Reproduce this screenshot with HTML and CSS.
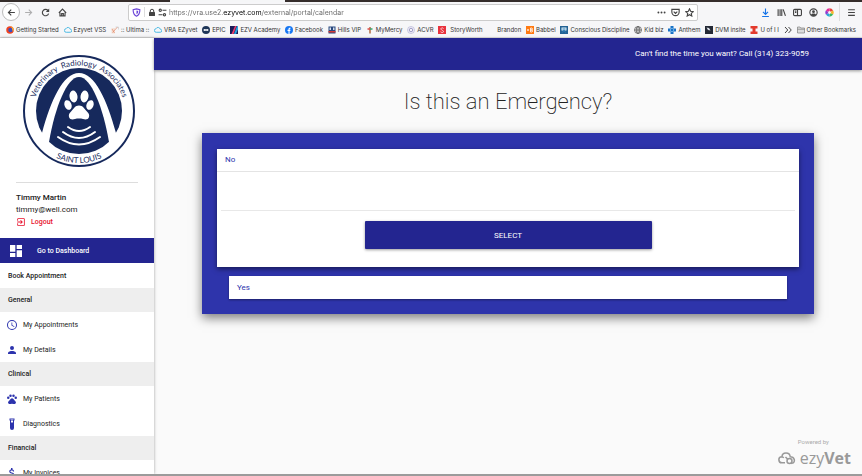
FILE: index.html
```
<!DOCTYPE html>
<html lang="en">
    <head>
        <meta charset="utf-8">
        <title>Calendar</title>
        <meta name="viewport" content="width=device-width, initial-scale=1">
        <link rel="stylesheet" href="styles.css">
    </head>
    <body>
        <div class="tabs"><span class="tab"></span></div>
        <header class="browser">
            <div class="toolbar">
                <div class="history">
                    <button class="back" aria-label="Back"><svg viewBox="0 0 16 16"><path d="M14 8H3M7.500 3L2.500 8l5 5"/></svg></button>
                    <button class="faded" aria-label="Forward"><svg viewBox="0 0 16 16"><path d="M2 8h11M8.500 3l5 5-5 5"/></svg></button>
                    <button aria-label="Reload"><svg viewBox="0 0 16 16"><path d="M12.500 4.500A5.700 5.700 0 1 0 13.500 10"/><path class="solid" d="M14.500 1v6h-6z"/></svg></button>
                    <button aria-label="Home"><svg viewBox="0 0 16 16"><path d="M1.500 8.500L8 2l6.500 6.500M3.500 8v6h9V8M6.500 14v-4h3v4"/></svg></button>
                </div>
                <form class="address">
                    <svg class="shield" viewBox="0 0 16 16"><path d="M8 1.500L14 3c0 6-1.500 9.500-6 11.500C3.500 12.500 2 9 2 3z"/><path class="solid" d="M8 4.500l3 .8c0 3-.8 4.800-3 6z"/></svg>
                    <i class="divider"></i>
                    <svg class="lock" viewBox="0 0 16 16"><rect class="solid" x="2" y="7" width="12" height="8" rx="1"/><path d="M4.500 7V5a3.500 3.500 0 0 1 7 0v2"/></svg>
                    <svg viewBox="0 0 16 16"><circle cx="4" cy="4" r="2"/><path d="M8 4h7M1 12h7"/><circle cx="11.500" cy="12" r="2"/></svg>
                    <input class="url" aria-label="Address" value="https://vra.use2.ezyvet.com/external/portal/calendar">
                    <button type="button" aria-label="Page actions"><svg viewBox="0 0 16 16"><g class="solid"><circle cx="2.500" cy="8" r="1.700"/><circle cx="8" cy="8" r="1.700"/><circle cx="13.500" cy="8" r="1.700"/></g></svg></button>
                    <button type="button" aria-label="Save"><svg viewBox="0 0 16 16"><path d="M1.500 2.500h13V7a6.500 6.500 0 0 1-13 0zM4.800 6.300L8 9.500l3.200-3.200"/></svg></button>
                    <button type="button" aria-label="Bookmark"><svg viewBox="0 0 16 16"><path d="M8 1.500l2 4.300 4.700.6-3.500 3.200.9 4.700L8 12l-4.100 2.300.9-4.700L1.300 6.400 6 5.800z"/></svg></button>
                </form>
                <div class="tools">
                    <button class="download" aria-label="Downloads"><svg viewBox="0 0 16 16"><path d="M8 1v10M3.500 7L8 11.500 12.500 7M2 15h12"/></svg></button>
                    <button aria-label="Library"><svg viewBox="0 0 16 16"><path d="M2 2v12M5.500 2v12M8.500 2v12M11 2.500L15 14"/></svg></button>
                    <button aria-label="Sidebar"><svg viewBox="0 0 16 16"><rect x="1" y="2.500" width="14" height="11" rx="2"/><path d="M8 3v10M3.500 5.500h2.500M3.500 8h2.500"/></svg></button>
                    <button aria-label="Account"><svg viewBox="0 0 16 16"><circle cx="8" cy="8" r="6.500"/><g class="solid"><circle cx="8" cy="6.500" r="2.500"/><path d="M3.500 12c1-3 8-3 9 0-2 3-7 3-9 0z"/></g></svg></button>
                    <button aria-label="Extension"><svg viewBox="0 0 16 16"><g class="wheel"><path stroke="#e8443a" d="M8 3a5 5 0 0 1 4.300 2.500"/><path stroke="#f5b52a" d="M12.300 5.500a5 5 0 0 1 0 5"/><path stroke="#38b764" d="M12.300 10.500A5 5 0 0 1 8 13"/><path stroke="#2aa9d8" d="M8 13a5 5 0 0 1-4.300-2.500"/><path stroke="#8e3fd0" d="M3.700 10.500a5 5 0 0 1 0-5"/><path stroke="#e32c9b" d="M3.700 5.500A5 5 0 0 1 8 3"/></g></svg></button>
                    <i class="divider"></i>
                    <button aria-label="Menu"><svg viewBox="0 0 16 16"><path d="M2 3h12M2 8h12M2 13h12"/></svg></button>
                </div>
            </div>
            <nav class="bookmarks">
                <a href="#"><svg viewBox="0 0 16 16"><circle cx="8" cy="8" r="7.500" fill="#f0431f"/><circle cx="9" cy="8" r="4.500" fill="#3d4ec0"/><path d="M9 0c6 2 8 7 5 12-1-3-1-7-5-12z" fill="#ffb52e"/></svg>Getting Started</a>
                <a href="#"><svg viewBox="0 0 16 16"><path d="M4.500 12.500a3.500 3.500 0 0 1-.5-7 4.500 4.500 0 0 1 8.500 1 3 3 0 0 1 0 6z" fill="none" stroke="#4dbbe4" stroke-width="2"/></svg>Ezyvet VSS</a>
                <a href="#"><svg viewBox="0 0 16 16"><path d="M1 4h7v11H1z" fill="#f3e2d8"/><path d="M2 6l5 8M3 13L13 2" stroke="#e58a6a" stroke-width="1.500"/><path d="M9 2h6v5" fill="none" stroke="#bbb"/></svg>:: Ultima ::</a>
                <a href="#"><svg viewBox="0 0 16 16"><path d="M4.500 12.500a3.500 3.500 0 0 1-.5-7 4.500 4.500 0 0 1 8.500 1 3 3 0 0 1 0 6z" fill="none" stroke="#4dbbe4" stroke-width="2"/></svg>VRA EZyvet</a>
                <a href="#"><svg viewBox="0 0 16 16"><circle cx="8" cy="8" r="8" fill="#1f3658"/><path d="M3.500 6h9v4h-9z" fill="#fff"/><path d="M5 8h6" stroke="#1f3658"/></svg>EPIC</a>
                <a href="#"><svg viewBox="0 0 16 16"><path d="M0 0h16v16H0z" fill="#1b1b58"/><path d="M3 16L10 0h3L7 16z" fill="#ef3d6b"/><path d="M8 16l6-16h2v7l-4 9z" fill="#27a3dd"/></svg>EZV Academy</a>
                <a href="#"><svg viewBox="0 0 16 16"><circle cx="8" cy="8" r="8" fill="#1877f2"/><path d="M7 16v-6H5V7.500h2V6c0-2 1.500-3 4-2.600v2c-1.500 0-1.800.2-1.800 2.100H11l-.4 2.500H9.200v6z" fill="#fff"/></svg>Facebook</a>
                <a href="#"><svg viewBox="0 0 16 16"><path d="M1 1h14v14H1z" fill="#29487e"/><path d="M1 10h14v3H1z" fill="#d83a35"/><path d="M3 3h3v5H3zM10 3h3v5h-3z" fill="#d8dfed"/></svg>Hills VIP</a>
                <a href="#"><svg viewBox="0 0 16 16"><path d="M8 2v13" stroke="#b16b40" stroke-width="3"/><path d="M3 6h5" stroke="#dd4c48" stroke-width="3"/><path d="M8 6h5" stroke="#38a36e" stroke-width="3"/></svg>MyMercy</a>
                <a href="#"><svg viewBox="0 0 16 16"><circle cx="8" cy="8" r="7" fill="#f4f3fa" stroke="#9c9bc8"/><circle cx="8" cy="8" r="3.500" fill="none" stroke="#8381b5" stroke-width="1.500"/></svg>ACVR</a>
                <a href="#" class="wide"><svg viewBox="0 0 16 16"><path d="M0 0h16v16H0z" fill="#e8323c"/><path d="M11 5C9 2.500 5 4 6 6.500s5 2 5 4.500-4 2.500-6 .5" fill="none" stroke="#fff" stroke-width="1.500"/></svg>StoryWorth</a>
                <a href="#" class="plain">Brandon</a>
                <a href="#"><svg viewBox="0 0 16 16"><path d="M0 0h16v16H0z" fill="#ff7a12"/><path d="M2 8h4M4 6v4M9 4h3q2 2 0 4H9zM9 8h3q3 2 0 4H9z" fill="none" stroke="#fff" stroke-width="1.500"/></svg>Babbel</a>
                <a href="#"><svg viewBox="0 0 16 16"><path d="M0 0h16v16H0z" fill="#246395"/><path d="M3 3h10v6H3z" fill="#dff0f7"/><path d="M5 6h6M5 13l3-5 3 5" fill="none" stroke="#2f7db8" stroke-width="2"/></svg>Conscious Discipline</a>
                <a href="#"><svg viewBox="0 0 16 16"><g fill="none" stroke="#555" stroke-width="1.500"><circle cx="8" cy="8" r="7"/><path d="M1 8h14M8 1v14"/><ellipse cx="8" cy="8" rx="3.500" ry="7"/></g></svg>Kid biz</a>
                <a href="#"><svg viewBox="0 0 16 16"><path d="M5 0h6v5h5v6h-5v5H5v-5H0V5h5z" fill="#1671c6"/><circle cx="8" cy="8" r="3.500" fill="none" stroke="#8bc3ee" stroke-width="1.500"/></svg>Anthem</a>
                <a href="#"><svg viewBox="0 0 16 16"><path d="M0 0h16v16H0z" fill="#252a36"/><path d="M3 3l5 1 3 5-5-1z" fill="#dbe0e8"/></svg>DVM insite</a>
                <a href="#"><svg viewBox="0 0 16 16"><path d="M1 0h14v5h-4v6h4v5H1v-5h4V5H1z" fill="#e33a2c"/></svg>U of I I</a>
                <a href="#" aria-label="More bookmarks"><svg viewBox="0 0 16 16"><path d="M2 2l5.500 6L2 14M9 2l5.500 6L9 14" fill="none" stroke="#444" stroke-width="2"/></svg></a>
                <a href="#"><svg viewBox="0 0 16 16"><path d="M1 2h5l1.500 2H15v10H1zM1 6.500h14" fill="#ddd" stroke="#777" stroke-width="1.300"/></svg>Other Bookmarks</a>
            </nav>
        </header>
        <div class="page">
            <aside class="sidebar">
                <svg class="logo" viewBox="0 0 112 112" role="img" aria-label="Veterinary Radiology Associates Saint Louis">
                    <defs>
                        <clipPath id="disc"><circle cx="56" cy="56" r="43"/></clipPath>
                        <path id="arc-top" d="M10.500 56a45.500 45.500 0 0 1 91 0"/>
                        <path id="arc-bottom" d="M4 56a52 52 0 0 0 104 0"/>
                    </defs>
                    <circle cx="56" cy="56" r="55" fill="#fff" stroke="#16295c" stroke-width="2"/>
                    <g clip-path="url(#disc)">
                        <path d="M13 13h86v65h-6C84 45 72 18 56 18S28 45 19 78h-6z" fill="#16295c"/>
                        <path d="M26 87C32 52 44 22 56 22s24 30 30 65v12H26z" fill="#16295c"/>
                    </g>
                    <g fill="#fff">
                        <ellipse cx="50.500" cy="41.500" rx="4" ry="6" transform="rotate(-8 50.500 41.500)"/>
                        <ellipse cx="61.500" cy="41.500" rx="4" ry="6" transform="rotate(8 61.500 41.500)"/>
                        <ellipse cx="45" cy="50" rx="3.500" ry="5" transform="rotate(-22 45 50)"/>
                        <ellipse cx="67" cy="50" rx="3.500" ry="5" transform="rotate(22 67 50)"/>
                        <path d="M56 50.500c4 0 5 3 7.500 5.500 2.500 2.300 3 4 2.500 6-1 3-4 2.500-6 2-2.500-.6-5.500-.6-8 0-2 .5-5 1-6-2-.5-2 0-3.700 2.500-6 2.500-2.500 3.500-5.500 7.500-5.500z"/>
                    </g>
                    <path d="M45 72q11 8 22 0M40 77q16 12 32 0M35 82q21 15 42 0" fill="none" stroke="#fff" stroke-width="2" stroke-linecap="round"/>
                    <text class="logo-text"><textPath href="#arc-top" startOffset="50%">Veterinary&#160; Radiology&#160; Associates</textPath></text>
                    <text class="logo-text"><textPath href="#arc-bottom" startOffset="50%">SAINT LOUIS</textPath></text>
                </svg>
                <section class="user">
                    <strong>Timmy Martin</strong>
                    <span>timmy@well.com</span>
                    <a href="#" class="logout"><svg viewBox="0 0 24 24"><path d="M10.100 15.600L11.500 17l5-5-5-5-1.400 1.400L12.700 11H3v2h9.700zM19 3H5a2 2 0 0 0-2 2v4h2V5h14v14H5v-4H3v4a2 2 0 0 0 2 2h14a2 2 0 0 0 2-2V5a2 2 0 0 0-2-2z"/></svg>Logout</a>
                </section>
                <nav class="menu">
                    <a href="#" class="dashboard"><svg viewBox="0 0 24 24"><path d="M3 13h8V3H3zm0 8h8v-6H3zm10 0h8V11h-8zm0-18v6h8V3z"/></svg>Go to Dashboard</a>
                    <a href="#" class="book">Book Appointment</a>
                    <h2>General</h2>
                    <a href="#"><svg viewBox="0 0 24 24"><path d="M12 2a10 10 0 1 0 0 20 10 10 0 0 0 0-20zm0 18a8 8 0 1 1 0-16 8 8 0 0 1 0 16zm.5-13H11v6l5.200 3.200.8-1.300-4.500-2.700z"/></svg>My Appointments</a>
                    <a href="#"><svg viewBox="0 0 24 24"><path d="M12 12a4 4 0 1 0 0-8 4 4 0 0 0 0 8zm0 2c-2.700 0-8 1.300-8 4v2h16v-2c0-2.700-5.300-4-8-4z"/></svg>My Details</a>
                    <h2>Clinical</h2>
                    <a href="#"><svg viewBox="0 0 24 24"><circle cx="4.500" cy="9.500" r="2.500"/><circle cx="9" cy="5.500" r="2.500"/><circle cx="15" cy="5.500" r="2.500"/><circle cx="19.500" cy="9.500" r="2.500"/><path d="M17.300 14.900c-.9-1-1.600-1.900-2.500-2.900-1.600-1.800-4-1.800-5.600 0-.9 1-1.600 1.900-2.500 2.900-1.300 1.300-2.900 2.700-2.600 4.700.3 1 1 2 2.300 2.300 1.800.3 3.400-.6 5.600-.6s3.800.9 5.600.6c1.300-.3 2-1.300 2.300-2.300.3-2-1.300-3.400-2.600-4.700z"/></svg>My Patients</a>
                    <a href="#"><svg viewBox="0 0 24 24"><path d="M7 1h10v4h-1v15a4 4 0 0 1-8 0V5H7zm3 4v4h4V5zM9 2.500v1h6v-1z"/></svg>Diagnostics</a>
                    <h2>Financial</h2>
                    <a href="#"><svg viewBox="0 0 24 24"><path d="M11.800 10.900c-2.300-.6-3-1.200-3-2.100 0-1.100 1-1.900 2.700-1.900 1.800 0 2.400.9 2.500 2.100h2.200c-.1-1.700-1.100-3.300-3.200-3.800V2h-3v3.200c-1.900.4-3.500 1.600-3.500 3.600 0 2.300 1.900 3.500 4.700 4.100 2.500.6 3 1.500 3 2.400 0 .7-.5 1.800-2.700 1.800-2.100 0-2.900-.9-3-2.100H6.300c.1 2.200 1.800 3.400 3.700 3.800V22h3v-3.200c1.900-.4 3.500-1.500 3.500-3.600 0-2.800-2.400-3.700-4.700-4.300z"/></svg>My Invoices</a>
                </nav>
            </aside>
            <div class="content">
                <div class="banner">Can't find the time you want? Call (314) 323-9059</div>
                <main>
                    <h1>Is this an Emergency?</h1>
                    <section class="options">
                        <article class="option open">
                            <h3>No</h3>
                            <div class="details">
                                <button class="select">SELECT</button>
                            </div>
                        </article>
                        <article class="option">
                            <h3>Yes</h3>
                        </article>
                    </section>
                </main>
                <footer class="powered">
                    <span>Powered by</span>
                    <div class="brand">
                        <svg viewBox="0 0 36 26"><path d="M14 21.500H8a6 6 0 0 1-.500-12c1 0 3 .5 4 2.500M8 9.500C8 5 11.500 2 16 2s8 3 8.500 7.500c4 0 7 2.500 8 5.500 1 4-1.500 7-4 7.500"/><circle cx="23" cy="18" r="5"/><path d="M19.500 14.500L15 10M26.500 21.500l2 2"/></svg>
                        <span>ezy<b>Vet</b></span>
                    </div>
                </footer>
            </div>
        </div>
    </body>
</html>
```
FILE: styles.css
```
* {
    box-sizing: border-box;
}

body {
    display: flex;
    flex-direction: column;
    height: 100vh;
    margin: 0;
    overflow: hidden;
    font-family: Roboto, sans-serif;
    font-size: 8px;
    color: #222;
    background-color: #fafafa;
    border-bottom: 2px solid #9b9b9b;
}

a {
    color: inherit;
    text-decoration: none;
}

button {
    padding: 0;
    border: 0;
    background: none;
    font-family: inherit;
    color: inherit;
}

svg {
    flex: none;
    display: block;
}

h1, h2, h3 {
    margin: 0;
}

/* browser bar */
.tabs {
    flex: none;
    display: flex;
    height: 2px;
    padding-left: 170px;
    background-color: #352d2b;
}

.tab {
    width: 115px;
    background-color: #f5f6f7;
}

.browser {
    flex: none;
    font-family: Inter, sans-serif;
    font-size: 6px;
    color: #333;
    background-color: #f6f6f8;
    border-bottom: 1px solid #ddd;
}

.toolbar {
    display: flex;
    align-items: center;
    height: 20px;
    padding: 0 6px 0 2px;
}

.toolbar svg {
    width: 9px;
    height: 9px;
    fill: none;
    stroke: #444;
    stroke-width: 2;
}

.toolbar .solid {
    fill: #444;
    stroke: none;
}

.history {
    display: flex;
    align-items: center;
    gap: 8px;
    width: 126px;
}

.back {
    display: flex;
    align-items: center;
    justify-content: center;
    width: 18px;
    height: 18px;
    border: 1px solid #bbb;
    border-radius: 50%;
    background-color: #fff;
}

.back + .faded {
    margin-left: -4px;
}

.faded {
    opacity: 0.4;
}

.address {
    flex: 1;
    display: flex;
    align-items: center;
    gap: 2px;
    height: 17px;
    padding: 0 3px;
    border: 1px solid #ccc;
    border-radius: 2px;
    background-color: #fff;
}

.address button + button {
    margin-left: 3px;
}

.address .shield {
    stroke: #6b45d8;
}

.address .shield .solid {
    fill: #6b45d8;
}

.address .lock {
    width: 8px;
}

.divider {
    width: 1px;
    height: 10px;
    background-color: #ddd;
}

.address .divider {
    margin: 0 1px;
}

/* the host name is darker than the rest of the address */
.url {
    flex: 1;
    min-width: 0;
    padding: 0;
    border: 0;
    outline: 0;
    font-family: Inter, sans-serif;
    font-size: 7px;
    color: transparent;
    background: linear-gradient(90deg, #666 54px, #000 54px, #000 93px, #666 93px);
    background-clip: text;
    -webkit-background-clip: text;
}

.tools {
    display: flex;
    align-items: center;
    gap: 7px;
    padding-left: 63px;
}

.tools .download svg {
    stroke: #1674e8;
}

.tools .divider {
    height: 18px;
    margin-left: -2px;
}

.tools .wheel {
    stroke-width: 5;
}

.bookmarks {
    display: flex;
    align-items: center;
    justify-content: space-between;
    height: 15px;
    padding: 0 6px;
    white-space: nowrap;
}

.bookmarks a {
    display: flex;
    align-items: center;
    gap: 2px;
}

.bookmarks .wide {
    gap: 4px;
}

.bookmarks .plain {
    padding-left: 10px;
}

.bookmarks svg {
    width: 8px;
    height: 8px;
}

/* portal */
.page {
    flex: 1;
    display: flex;
    min-height: 0;
}

.sidebar {
    flex: none;
    width: 154px;
    overflow: hidden;
    background-color: #fff;
    box-shadow: 0 0 3px rgba(0, 0, 0, 0.35);
}

.logo {
    width: 112px;
    height: 112px;
    margin: 17px 23px 15px;
}

.logo-text {
    font-family: Lato, sans-serif;
    font-size: 8px;
    fill: #16295c;
    text-anchor: middle;
}

.user {
    display: flex;
    flex-direction: column;
    margin: 0 16px;
    padding: 9px 0 10px;
    border-top: 1px solid #ddd;
    line-height: 12px;
}

.user strong {
    font-weight: 500;
}

.logout {
    display: flex;
    align-items: center;
    gap: 5px;
    font-size: 7px;
    font-weight: 500;
    color: #e8112d;
}

.logout svg {
    width: 10px;
    height: 10px;
    fill: #e8112d;
}

.menu {
    font-size: 7px;
}

.menu a {
    display: flex;
    align-items: center;
    gap: 5px;
    height: 25px;
    padding-left: 6px;
}

.menu svg {
    width: 12px;
    height: 12px;
    fill: #2c33ad;
}

.menu h2 {
    height: 24px;
    padding-left: 8px;
    font-size: 7px;
    font-weight: 500;
    line-height: 24px;
    background-color: #eee;
}

.menu .dashboard {
    gap: 13px;
    padding-left: 8px;
    font-weight: 500;
    color: #fff;
    background-color: #232590;
}

.menu .dashboard svg {
    width: 16px;
    height: 16px;
    fill: #fff;
}

.menu .book {
    padding-left: 8px;
    font-weight: 500;
}

.content {
    flex: 1;
    display: flex;
    flex-direction: column;
}

.banner {
    height: 32px;
    padding-right: 53px;
    line-height: 32px;
    text-align: right;
    color: #fff;
    background-color: #232590;
    box-shadow: 0 1px 3px rgba(0, 0, 0, 0.4);
}

main {
    flex: 1;
    padding: 16px 48px;
}

h1 {
    font-size: 22px;
    font-weight: 200;
    line-height: 31px;
    text-align: center;
}

.options {
    margin-top: 16px;
    padding: 16px 15px 15px;
    background-color: #2e34ab;
    box-shadow: 0 4px 10px rgba(0, 0, 0, 0.5);
}

.option {
    margin: 0 12px;
    background-color: #fff;
    box-shadow: 0 1px 2px rgba(0, 0, 0, 0.4);
}

.option h3 {
    padding-left: 8px;
    font-size: 8px;
    font-weight: 400;
    line-height: 23px;
    color: #2c33ad;
}

.open {
    margin: 0 0 9px;
    padding-bottom: 18px;
    box-shadow: 0 2px 5px rgba(0, 0, 0, 0.5);
}

.open h3 {
    line-height: 22px;
    border-bottom: 1px solid #e4e4e4;
}

.details {
    margin: 0 4px;
}

.details::before {
    content: "";
    display: block;
    height: 38px;
    margin-bottom: 10px;
    border-bottom: 1px solid #e8e8e8;
}

.select {
    display: block;
    width: 50%;
    height: 28px;
    margin: 0 auto;
    border-radius: 1px;
    font-size: 8px;
    color: #fff;
    background-color: #232590;
    box-shadow: 0 1px 3px rgba(0, 0, 0, 0.4);
}

.powered {
    display: flex;
    flex-direction: column;
    align-self: flex-end;
    gap: 3px;
    padding: 0 11px 7px;
    font-size: 6px;
    line-height: 8px;
    text-align: center;
    color: #aaa;
}

.powered > span {
    padding-right: 2px;
}

.brand {
    display: flex;
    align-items: center;
    gap: 4px;
    font-family: "Open Sans", sans-serif;
    font-size: 16px;
    line-height: 18px;
    color: #999;
}

.brand svg {
    width: 18px;
    height: 13px;
    fill: none;
    stroke: #999;
    stroke-width: 3;
}
```
